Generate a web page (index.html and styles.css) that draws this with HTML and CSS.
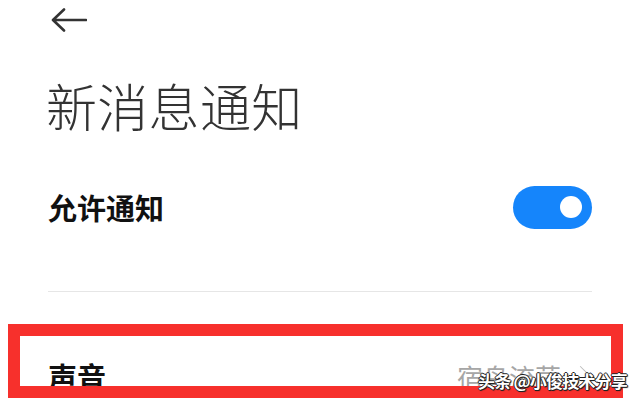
FILE: index.html
```html
<!DOCTYPE html>
<html lang="zh-CN">
<head>
  <meta charset="UTF-8">
  <title>新消息通知</title>
  <link rel="stylesheet" href="styles.css">
</head>
<body>
  <header class="top-bar">
    <button class="back-btn" aria-label="返回">
      <svg width="36" height="26" viewBox="0 0 36 26">
        <path d="M35 12H3M13 1.5L2 12l11 10.5" fill="none" stroke="#333" stroke-width="2.6" stroke-linecap="round" stroke-linejoin="round"/>
      </svg>
    </button>
  </header>

  <main class="settings">
    <h1 class="page-title">新消息通知</h1>

    <!-- Allow notifications -->
    <div class="setting-row">
      <span class="setting-label">允许通知</span>
      <span class="switch on"><span class="knob"></span></span>
    </div>

    <hr class="divider">

    <!-- Sound -->
    <div class="setting-row sound-row">
      <span class="setting-label">声音</span>
      <span class="setting-value">宿鸟流萤<span class="chevron"></span></span>
    </div>
  </main>

  <!-- annotation + watermark over the screenshot -->
  <div class="highlight-box"></div>
  <div class="watermark">头条 @小俊技术分享</div>
</body>
</html>
```

FILE: styles.css
```css
html, body {
  margin: 0;
  height: 100%;
  overflow: hidden;
}

body {
  font-family: "Noto Sans CJK SC", "Noto Sans", sans-serif;
  background-color: #fff;
  color: #111;
  position: relative;
}

.top-bar {
  padding: 8px 0 0 51px;
  height: 30px;
}

.back-btn {
  background: none;
  border: none;
  padding: 0;
  cursor: pointer;
  display: block;
}

.settings {
  padding: 0 48px;
}

.page-title {
  font-size: 51px;
  font-weight: 300;
  color: #333;
  line-height: 1;
  margin: 42px 0 0 -2px;
  letter-spacing: 0.3px;
}

.setting-row {
  display: flex;
  align-items: center;
  justify-content: space-between;
}

.setting-row:first-of-type {
  margin-top: 55px;
}

.setting-label {
  font-size: 29px;
  font-weight: 700;
  line-height: 1;
}

/* Toggle */
.switch {
  width: 79px;
  height: 43px;
  border-radius: 22px;
  background-color: #ccc;
  position: relative;
  display: inline-block;
}

.switch.on {
  background-color: #1585fb;
}

.knob {
  position: absolute;
  width: 22px;
  height: 22px;
  border-radius: 50%;
  background: #fff;
  top: 10px;
  right: 10px;
}

.divider {
  border: none;
  border-top: 1px solid #e6e6e6;
  margin: 62px 0 0;
}

.sound-row {
  margin-top: 70px;
}

.setting-value {
  font-size: 26px;
  color: #a6a6a6;
  line-height: 1;
  display: flex;
  align-items: center;
}

.chevron {
  display: inline-block;
  width: 14px;
  height: 14px;
  border-top: 1.5px solid #bbb;
  border-right: 1.5px solid #bbb;
  transform: rotate(45deg);
  margin-left: 12px;
  margin-right: 4px;
}

/* Red annotation frame */
.highlight-box {
  position: absolute;
  left: 8px;
  top: 324px;
  width: 591px;
  height: 50px;
  border: 12px solid #f7302c;
}

.watermark {
  position: absolute;
  left: 478px;
  top: 368px;
  font-size: 17px;
  font-weight: 700;
  color: #fff;
  letter-spacing: -0.8px;
  text-shadow: 1px 0 0 #222, -1px 0 0 #222, 0 1px 0 #222, 0 -1px 0 #222, 1px 1px 1px #222;
}
```
